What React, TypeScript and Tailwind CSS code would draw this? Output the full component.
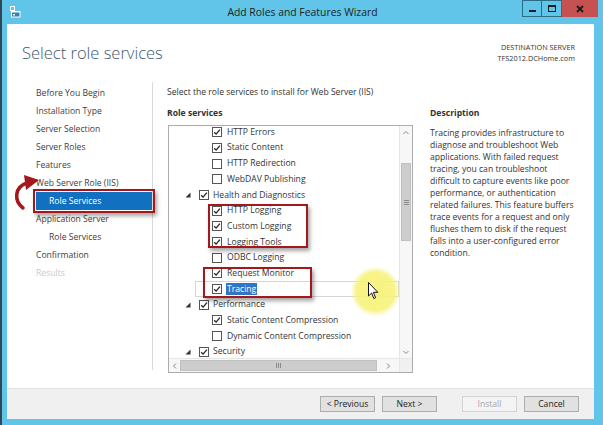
import React from 'react';

type Row = { t: string; l: number; c: boolean; sel?: boolean };

const rows: Row[] = [
  { t: 'HTTP Errors', l: 1, c: true },
  { t: 'Static Content', l: 1, c: true },
  { t: 'HTTP Redirection', l: 1, c: false },
  { t: 'WebDAV Publishing', l: 1, c: false },
  { t: 'Health and Diagnostics', l: 0, c: true },
  { t: 'HTTP Logging', l: 1, c: true },
  { t: 'Custom Logging', l: 1, c: true },
  { t: 'Logging Tools', l: 1, c: true },
  { t: 'ODBC Logging', l: 1, c: false },
  { t: 'Request Monitor', l: 1, c: true },
  { t: 'Tracing', l: 1, c: true, sel: true },
  { t: 'Performance', l: 0, c: true },
  { t: 'Static Content Compression', l: 1, c: true },
  { t: 'Dynamic Content Compression', l: 1, c: false },
  { t: 'Security', l: 0, c: true },
];

const descLines = [
  'Tracing provides infrastructure to',
  'diagnose and troubleshoot Web',
  'applications. With failed request',
  'tracing, you can troubleshoot',
  'difficult to capture events like poor',
  'performance, or authentication',
  'related failures. This feature buffers',
  'trace events for a request and only',
  'flushes them to disk if the request',
  'falls into a user-configured error',
  'condition.',
];

function Box({ checked }: { checked: boolean }) {
  return (
    <span className="w-[10px] h-[10px] border border-[#555] bg-white flex items-center justify-center shrink-0">
      {checked && (
        <svg width="8" height="8" viewBox="0 0 8 8">
          <path d="M1.2 4.2 L3.1 6.1 L6.9 1.6" fill="none" stroke="#222" strokeWidth="1.3" />
        </svg>
      )}
    </span>
  );
}

function Tri() {
  return (
    <svg width="6" height="6" viewBox="0 0 6 6" className="shrink-0">
      <polygon points="5.5,0.5 5.5,5.5 0.5,5.5" fill="#333" />
    </svg>
  );
}

function TreeRow({ r }: { r: Row }) {
  return (
    <div className="relative h-[15.7px] flex items-center shrink-0">
      {r.sel && <div className="absolute left-[26px] right-0 top-0 bottom-0 border border-[#d6d6d6]" />}
      {r.l === 0 ? (
        <div className="flex items-center pl-[16px]">
          <Tri />
          <span className="ml-[8px]"><Box checked={r.c} /></span>
          <span className="ml-[4px] text-[#333] whitespace-nowrap">{r.t}</span>
        </div>
      ) : (
        <div className="flex items-center pl-[43px]">
          <Box checked={r.c} />
          <span
            className={
              r.sel
                ? 'ml-[4px] px-[1px] bg-[#3076c6] text-white leading-[12px] whitespace-nowrap'
                : 'ml-[5px] text-[#333] whitespace-nowrap'
            }
          >
            {r.t}
          </span>
        </div>
      )}
    </div>
  );
}

function Chevron({ dir }: { dir: 'up' | 'down' | 'left' | 'right' }) {
  const d =
    dir === 'up'
      ? 'M1.5 5 L4 2.5 L6.5 5'
      : dir === 'down'
      ? 'M1.5 3 L4 5.5 L6.5 3'
      : dir === 'left'
      ? 'M5 1.5 L2.5 4 L5 6.5'
      : 'M3 1.5 L5.5 4 L3 6.5';
  return (
    <svg width="8" height="8" viewBox="0 0 8 8">
      <path d={d} fill="none" stroke="#8a8a8a" strokeWidth="1" />
    </svg>
  );
}

function NavItem({ label, sub, muted }: { label: string; sub?: boolean; muted?: boolean }) {
  return (
    <div
      className={
        'h-[18px] flex items-center whitespace-nowrap ' +
        (sub ? 'pl-[42px] ' : 'pl-[29px] ') +
        (muted ? 'text-[#c8c8c8]' : 'text-[#3d3d3d]')
      }
    >
      {label}
    </div>
  );
}

export default function App() {
  return (
    <div className="w-[603px] h-[425px] bg-[#60c5e8] border-l-2 border-[#2f4858] flex flex-col overflow-hidden relative font-['Open_Sans',sans-serif] text-[8.6px]">
      {/* Title bar */}
      <div className="h-[24px] shrink-0 grid grid-cols-[1fr_auto_1fr] items-center">
        <div className="pl-[8px] flex items-center">
          <svg width="11" height="12" viewBox="0 0 11 12">
            <rect x="0.5" y="0.5" width="4" height="4" fill="none" stroke="#ffffff" strokeWidth="1" />
            <rect x="1" y="5" width="9.5" height="6.5" fill="#ffffff" />
            <rect x="2" y="6.5" width="7.5" height="4" fill="#3e7fa8" />
            <rect x="3" y="8" width="2" height="1.5" fill="#ffffff" />
          </svg>
        </div>
        <div className="text-[10.4px] text-[#1e1e1e] leading-none pt-[1px]">Add Roles and Features Wizard</div>
        <div className="flex justify-end self-start pr-[5px]">
          <div className="w-[20px] h-[17px] border border-[#2c6c86] flex items-end justify-center pb-[4px]">
            <div className="w-[7px] h-[2.5px] bg-[#1a1a1a]" />
          </div>
          <div className="w-[20px] h-[17px] border border-l-0 border-[#2c6c86] flex items-center justify-center">
            <div className="w-[8px] h-[7px] border-[1.5px] border-t-[2.5px] border-[#1a1a1a]" />
          </div>
          <div className="w-[36px] h-[17px] bg-[#c75050] flex items-center justify-center">
            <svg width="8" height="8" viewBox="0 0 8 8">
              <path d="M1 1 L7 7 M7 1 L1 7" stroke="#1a1a1a" strokeWidth="1.8" />
            </svg>
          </div>
        </div>
      </div>

      {/* Client area */}
      <div className="flex-1 ml-[5px] mr-[9px] mb-[6px] bg-white flex flex-col">
        {/* Header */}
        <div className="h-[54px] shrink-0 flex justify-between">
          <div className="pl-[15px] pt-[17px] text-[16.5px] font-light leading-[24px] text-[#3f5a6e]">
            Select role services
          </div>
          <div className="pr-[19px] pt-[17.5px] text-right text-[7.3px] leading-[11px] text-[#333]">
            <div>DESTINATION SERVER</div>
            <div>TFS2012.DCHome.com</div>
          </div>
        </div>

        {/* Main */}
        <div className="flex-1 flex">
          {/* Nav */}
          <div className="w-[145px] shrink-0 pt-[6px]">
            <NavItem label="Before You Begin" />
            <NavItem label="Installation Type" />
            <NavItem label="Server Selection" />
            <NavItem label="Server Roles" />
            <NavItem label="Features" />
            <NavItem label="Web Server Role (IIS)" />
            <div className="ml-[29px] relative">
              <div className="h-[18px] flex items-center pl-[13px] bg-[#1170c0] text-white whitespace-nowrap">
                Role Services
              </div>
              <div className="absolute -inset-[3px] border-2 border-[#a3171d] shadow-[2px_3px_4px_rgba(0,0,0,0.35)]" />
            </div>
            <NavItem label="Application Server" />
            <NavItem label="Role Services" sub />
            <NavItem label="Confirmation" />
            <NavItem label="Results" muted />
          </div>

          {/* Divider */}
          <div className="w-px bg-[#dadada] mt-[4px] mb-[18px] shrink-0" />

          {/* Middle */}
          <div className="w-[260px] shrink-0 pl-[14px] pt-[8px]">
            <div className="leading-[12px] text-[#333] whitespace-nowrap">
              Select the role services to install for Web Server (IIS)
            </div>
            <div className="mt-[8.5px] leading-[12px] font-bold text-[#333]">Role services</div>
            {/* Tree box */}
            <div className="relative mt-[6.5px] ml-[1px] w-[245px] h-[248px] border border-[#acacac] flex flex-col">
              <div className="flex-1 flex min-h-0">
                <div className="flex-1 overflow-hidden pt-[3px]">
                  <div className="mt-[-4.6px] flex flex-col">
                    {rows.map((r) => (
                      <TreeRow key={r.t} r={r} />
                    ))}
                  </div>
                </div>
                {/* vertical scrollbar */}
                <div className="w-[13px] shrink-0 border-l border-[#e6e6e6] bg-[#f7f7f7] flex flex-col">
                  <div className="h-[13px] flex items-center justify-center">
                    <Chevron dir="up" />
                  </div>
                  <div className="h-[24px]" />
                  <div className="mx-[1px] h-[78px] bg-[#cdcdcd] border border-[#c0c0c0] flex items-center justify-center">
                    <svg width="5" height="5" viewBox="0 0 5 5">
                      <path d="M0 0.5 H5 M0 2.5 H5 M0 4.5 H5" stroke="#8a8a8a" strokeWidth="1" />
                    </svg>
                  </div>
                  <div className="flex-1" />
                  <div className="h-[13px] flex items-center justify-center">
                    <Chevron dir="down" />
                  </div>
                </div>
              </div>
              {/* horizontal scrollbar */}
              <div className="h-[14px] shrink-0 flex border-t border-[#e6e6e6] bg-[#f7f7f7]">
                <div className="w-[11px] flex items-center justify-center">
                  <Chevron dir="left" />
                </div>
                <div className="w-[197px] my-[1px] bg-[#cdcdcd] border border-[#c0c0c0] flex items-center justify-center">
                  <svg width="6" height="5" viewBox="0 0 6 5">
                    <path d="M0.5 0 V5 M2.5 0 V5 M4.5 0 V5" stroke="#8a8a8a" strokeWidth="1" />
                  </svg>
                </div>
                <div className="flex-1 flex items-center justify-center">
                  <Chevron dir="right" />
                </div>
                <div className="w-[13px] bg-[#f0f0f0] border-l border-[#e6e6e6]" />
              </div>

              {/* Annotations */}
              <div className="absolute left-[39px] top-[78px] w-[100px] h-[44px] border-2 border-[#a3171d] shadow-[2px_3px_4px_rgba(0,0,0,0.35)] pointer-events-none" />
              <div className="absolute left-[34px] top-[141px] w-[109px] h-[31px] border-2 border-[#a3171d] shadow-[2px_3px_4px_rgba(0,0,0,0.35)] pointer-events-none" />
              <div className="absolute left-[182px] top-[141px] w-[49px] h-[49px] rounded-full bg-[radial-gradient(circle,rgba(247,242,120,0.95)_0%,rgba(247,242,120,0.88)_55%,rgba(247,242,120,0)_72%)] pointer-events-none" />
              <svg className="absolute left-[199px] top-[156px] pointer-events-none" width="11" height="18" viewBox="0 0 11 18">
                <path d="M0.5 0.5 L0.5 14 L3.6 11 L5.8 16.5 L7.6 15.7 L5.4 10.3 L9.8 10.3 Z" fill="#ffffff" stroke="#111" strokeWidth="1" />
              </svg>
            </div>
          </div>

          {/* Description */}
          <div className="ml-[17px] w-[160px] pt-[29px]">
            <div className="leading-[12px] font-bold text-[#333]">Description</div>
            <div className="mt-[8px] leading-[12px] text-[#333] whitespace-nowrap">
              {descLines.map((l) => (
                <div key={l}>{l}</div>
              ))}
            </div>
          </div>
        </div>

        {/* Footer */}
        <div className="h-[31px] shrink-0 bg-[#f0f0f0] border-t border-[#e2e2e2] flex items-center justify-end pr-[15px]">
          <div className="w-[55px] h-[16px] border border-[#adadad] bg-[#e1e1e1] flex items-center justify-center text-[#222]">&lt; Previous</div>
          <div className="ml-[7px] w-[55px] h-[16px] border border-[#adadad] bg-[#e1e1e1] flex items-center justify-center text-[#222]">Next &gt;</div>
          <div className="ml-[25px] w-[55px] h-[16px] border border-[#d5d5d5] bg-[#f4f4f4] flex items-center justify-center text-[#a6a6a6]">Install</div>
          <div className="ml-[7px] w-[55px] h-[16px] border border-[#adadad] bg-[#e1e1e1] flex items-center justify-center text-[#222]">Cancel</div>
        </div>
      </div>

      {/* Red curved arrow annotation */}
      <svg className="absolute left-[6px] top-[170px] pointer-events-none" width="40" height="45" viewBox="0 0 40 45">
        <path d="M15 38 C 6 31, 6 17, 19 13" fill="none" stroke="#a3171d" strokeWidth="3.5" strokeLinecap="round" />
        <polygon points="16,5 31,10 18,20" fill="#a3171d" />
      </svg>
    </div>
  );
}
